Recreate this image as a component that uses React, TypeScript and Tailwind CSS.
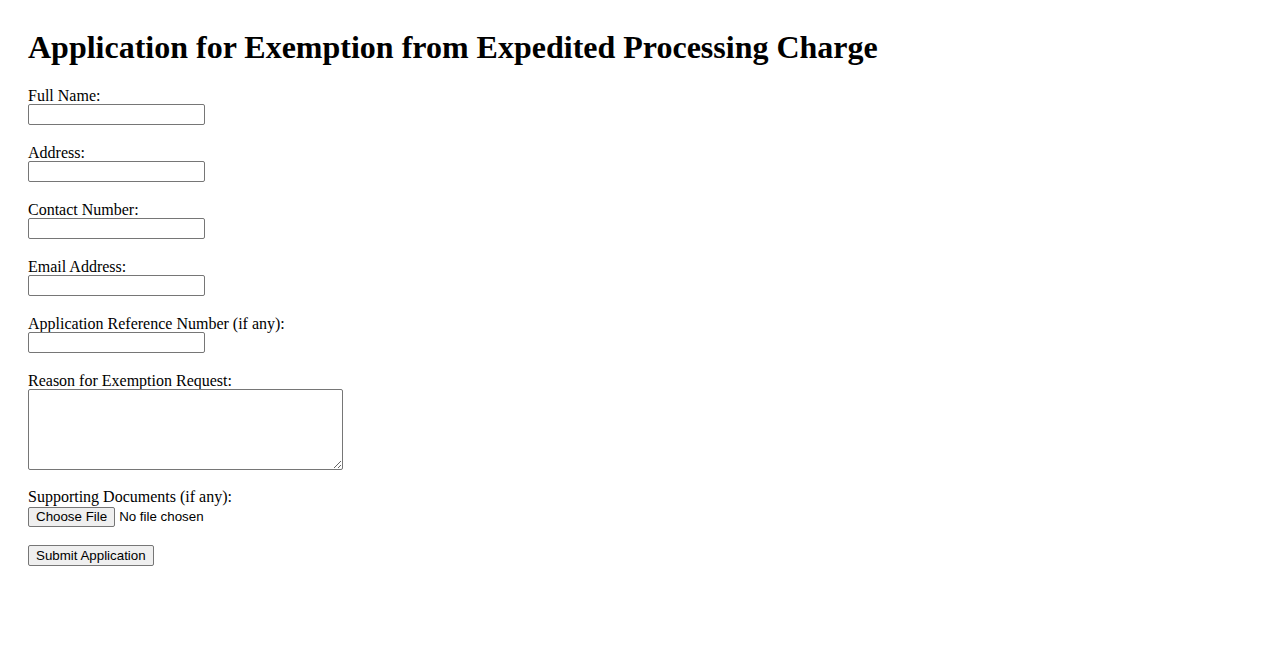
import React from 'react';

const fields = [
  { id: 'fullName', label: 'Full Name:' },
  { id: 'address', label: 'Address:' },
  { id: 'contact', label: 'Contact Number:' },
  { id: 'email', label: 'Email Address:' },
  { id: 'refNo', label: 'Application Reference Number (if any):' },
];

const btn =
  "bg-[#efefef] border border-[#767676] rounded-[2px] px-[7px] text-[13.33px] leading-[17px] text-black font-['Liberation_Sans',Arial,sans-serif]";

export default function App() {
  return (
    <div className="min-h-[650px] bg-white px-[28px] pt-[29px] text-[16px] text-black font-['Liberation_Serif','Times_New_Roman',serif]">
      <h1 className="mb-[21px] text-[32px] font-bold leading-[37px]">
        Application for Exemption from Expedited Processing Charge
      </h1>

      <form onSubmit={(e) => e.preventDefault()} className="flex flex-col items-start">
        {fields.map((f) => (
          <div key={f.id} className="mb-[19px] flex flex-col items-start">
            <label htmlFor={f.id} className="block leading-[17px]">
              {f.label}
            </label>
            <input
              id={f.id}
              type="text"
              className="h-[21px] w-[177px] rounded-[2px] border border-[#767676] bg-white px-[2px] text-[13.33px]"
            />
          </div>
        ))}

        <div className="mb-[18px] flex flex-col items-start">
          <label htmlFor="reason" className="block leading-[17px]">
            Reason for Exemption Request:
          </label>
          <textarea
            id="reason"
            className="h-[81px] w-[315px] resize rounded-[2px] border border-[#767676] bg-white p-[2px] text-[13.33px]"
          />
        </div>

        <div className="mb-[18px] flex flex-col items-start">
          <label className="block leading-[18px]">Supporting Documents (if any):</label>
          <div className="flex h-[21px] items-center gap-[4px] font-['Liberation_Sans',Arial,sans-serif] text-[13.33px]">
            <button type="button" className={btn + ' h-[20px]'}>
              Choose File
            </button>
            <span>No file chosen</span>
          </div>
        </div>

        <button type="submit" className={btn + ' h-[21px]'}>
          Submit Application
        </button>
      </form>
    </div>
  );
}
